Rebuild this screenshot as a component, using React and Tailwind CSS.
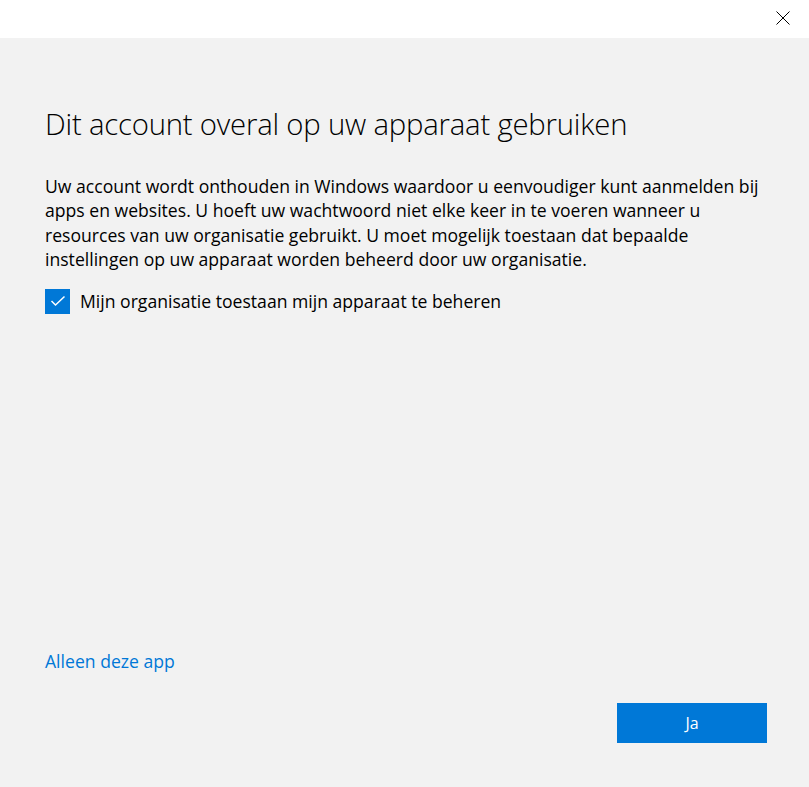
import React from 'react';

export default function App() {
  return (
    <div className="w-[809px] h-[787px] flex flex-col bg-[#f2f2f2] text-black" style={{ fontFamily: '"Open Sans", "Liberation Sans", sans-serif' }}>
      <div className="h-[38px] bg-white flex items-start justify-end shrink-0">
        <svg width="46" height="36" viewBox="0 0 46 36">
          <path d="M13.5 11.5 L26.5 24.5 M26.5 11.5 L13.5 24.5" stroke="#000" strokeWidth="1" />
        </svg>
      </div>

      <div className="flex-1 flex flex-col px-[45px] pt-[66px] pb-[44px]">
        <h1 className="text-[29.3px] font-light leading-[40px] tracking-[-0.2px]">Dit account overal op uw apparaat gebruiken</h1>

        <p className="mt-[30px] text-[17.6px] leading-[24.3px]">
          Uw account wordt onthouden in Windows waardoor u eenvoudiger kunt aanmelden bij apps en websites. U hoeft uw wachtwoord niet elke keer in te voeren wanneer u resources van uw organisatie gebruikt. U moet mogelijk toestaan dat bepaalde instellingen op uw apparaat worden beheerd door uw organisatie.
        </p>

        <label className="mt-[17px] flex items-center gap-[10px]">
          <span className="w-[25px] h-[25px] bg-[#0078d7] flex items-center justify-center">
            <svg width="16" height="12" viewBox="0 0 16 12">
              <path d="M1.5 6 L5.5 10 L14.5 1.5" stroke="#fff" strokeWidth="1.5" fill="none" />
            </svg>
          </span>
          <span className="text-[17.6px]">Mijn organisatie toestaan mijn apparaat te beheren</span>
        </label>

        <div className="flex-1" />

        <a className="text-[17.6px] text-[#0078d7] leading-[24px] self-start">Alleen deze app</a>

        <div className="mt-[30px] flex justify-end -mr-[3px]">
          <button className="w-[150px] h-[40px] bg-[#0078d7] text-white text-[16px]">Ja</button>
        </div>
      </div>
    </div>
  );
}
